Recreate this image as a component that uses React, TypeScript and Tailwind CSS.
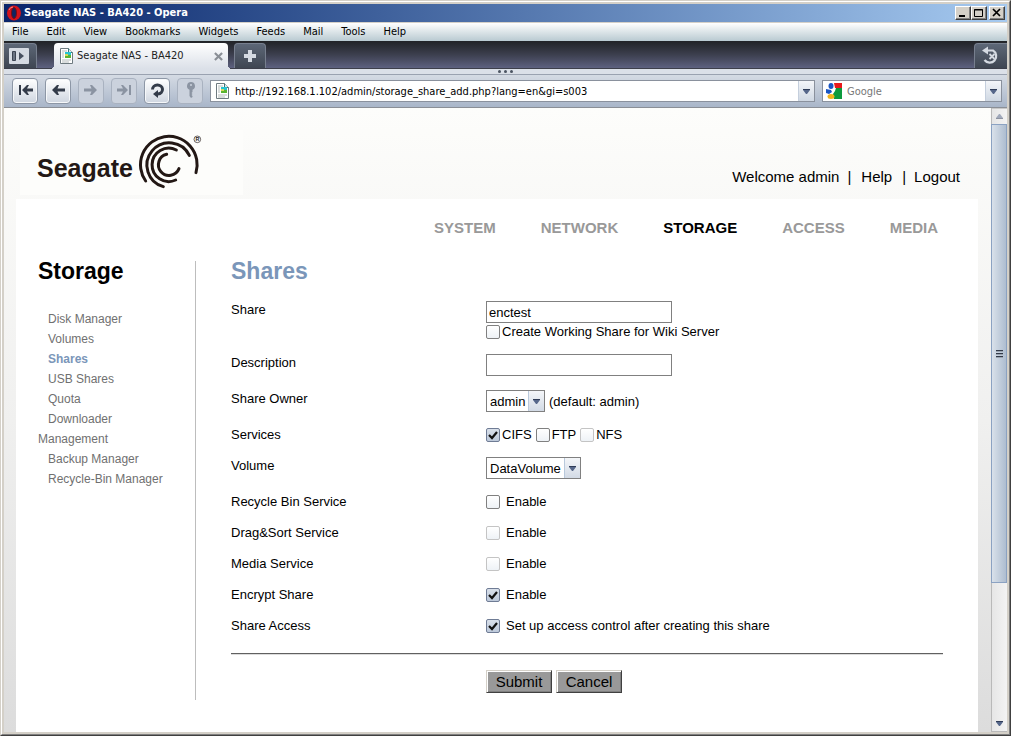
import React, { useState } from "react";
import clsx from "clsx";

const MENU = ["File", "Edit", "View", "Bookmarks", "Widgets", "Feeds", "Mail", "Tools", "Help"];
const NAV = ["SYSTEM", "NETWORK", "STORAGE", "ACCESS", "MEDIA"];
const SIDEBAR = [
  "Disk Manager",
  "Volumes",
  "Shares",
  "USB Shares",
  "Quota",
  "Downloader Management",
  "Backup Manager",
  "Recycle-Bin Manager",
];

const TOOLS = [
  { name: "Rewind", path: "M3 3h2v10H3zM6 8l5-5h2l-2 3.500h6v3h-6L13 13h-2z", enabled: true },
  { name: "Back", path: "M3 8l5-5h2L8.500 6.500H16v3H8.500L10 13H8z", enabled: true },
  { name: "Forward", path: "M15 8l-5-5H8l1.500 3.500H2v3h7.500L8 13h2z", enabled: false },
  { name: "Fast forward", path: "M14 3h2v10h-2zM13 8L8 3H6l2 3.500H2v3h6L6 13h2z", enabled: false },
  { name: "Reload", path: "", enabled: true },
  {
    name: "Wand",
    path: "M10 0a4 4 0 0 0-1.500 7.700V14l1.500 2 1.500-1V14l-1-1 1-1-1-1 1-1V7.700A4 4 0 0 0 10 0zm0 2a1 1 0 1 1 0 2 1 1 0 0 1 0-2z",
    enabled: false,
  },
];

const DownArrow = ({ className }: { className?: string }) => (
  <svg viewBox="0 0 7 5" className={clsx("h-[5px] w-[7px]", className)} aria-hidden="true">
    <path d="M0 0h7v1L4 5H3L0 1z" fill="#56678a" />
    <path d="M0 0h7v1H0z" fill="#2f3c58" />
  </svg>
);

const PageIcon = () => (
  <svg viewBox="0 0 13 16" className="h-4 w-[13px] shrink-0" aria-hidden="true">
    <path d="M.5.5h8l4 4v11H.5z" fill="#fff" stroke="#6e7a80" />
    <path d="M8.500.5v4h4" fill="#dfe8ea" stroke="#3f7478" />
    <path d="M2 3h5M2 12h9M2 14h7M2 5h2M2 7h2M2 9h2" stroke="#b4bbbb" />
    <path d="M5 4h6v3H5z" fill="#27c3d0" />
    <path d="M5 7h6v3H5z" fill="#5bb431" />
    <path d="M5 6h3v2H5z" fill="#d6d65a" />
  </svg>
);

const WindowButton = ({ label, children }: { label: string; children: React.ReactNode }) => (
  <button
    aria-label={label}
    className="flex h-[14px] w-4 items-center justify-center border border-t-white border-r-[#404040] border-b-[#404040] border-l-white bg-[#d4d0c8] shadow-[inset_-1px_-1px_0_#808080]"
  >
    <svg viewBox="0 0 12 10" className="h-[10px] w-3" fill="none" stroke="#000">
      {children}
    </svg>
  </button>
);

const TitleBar = () => (
  <div className="flex h-[18px] items-center bg-linear-to-r from-[#0a246a] to-[#a6caf0] px-[2px]">
    <svg viewBox="0 0 16 16" className="size-4" aria-hidden="true">
      <ellipse cx="8" cy="8" rx="7" ry="7.500" fill="#d3131b" />
      <ellipse cx="8" cy="8" rx="2.500" ry="5.500" fill="#0f2461" stroke="#7d0c12" />
      <path d="M3 5q1-3 4-3" stroke="#f58a86" fill="none" />
    </svg>
    <h1 className="ml-[2px] text-[11px] leading-4 font-bold text-white">Seagate NAS - BA420 - Opera</h1>
    <div className="ml-auto flex">
      <WindowButton label="Minimize">
        <path d="M2 8h6" strokeWidth="2" />
      </WindowButton>
      <WindowButton label="Maximize">
        <path d="M1.500 1.500h8v7h-8zM1 2h9" />
      </WindowButton>
      <div className="ml-[2px]">
        <WindowButton label="Close">
          <path d="M2 1l7 7M9 1L2 8" strokeWidth="1.700" />
        </WindowButton>
      </div>
    </div>
  </div>
);

const TabBar = () => (
  <div className="flex h-7 items-end border-b border-[#3d3f4b] bg-linear-to-b from-[#212327] via-[#3c3f4e] to-[#5d6180]">
    <button
      aria-label="Panels"
      className="flex h-[25px] w-[33px] items-center rounded-tr-[4px] border-t border-r border-[#777f8e] bg-linear-to-b from-[#5d6777] to-[#3f4652] pl-[5px]"
    >
      <svg viewBox="0 0 20 16" className="h-4 w-5">
        <rect width="20" height="16" rx="1" fill="#d5dae2" />
        <path d="M3.500 3.500h3v9h-3z" fill="#6a7382" stroke="#3c4452" />
        <path d="M10 4l5 4-5 4z" fill="#47505f" />
      </svg>
    </button>
    <div className="relative z-10 -mb-px ml-[17px] flex h-[26px] w-[174px] items-center rounded-t-[4px] bg-linear-to-b from-white to-[#dbe0e8] pr-[5px] pl-[6px] before:absolute before:bottom-0 before:-left-1 before:size-1 before:bg-[radial-gradient(circle_at_0_0,transparent_4px,#dbe0e8_4px)] after:absolute after:-right-1 after:bottom-0 after:size-1 after:bg-[radial-gradient(circle_at_100%_0,transparent_4px,#dbe0e8_4px)]">
      <PageIcon />
      <span className="ml-1 text-[11px] whitespace-nowrap text-[#222]">Seagate NAS - BA420</span>
      <button aria-label="Close tab" className="ml-auto">
        <svg viewBox="0 0 10 10" className="size-[9px]" stroke="#8a8f96" strokeWidth="2.400">
          <path d="M1 1l8 8M9 1L1 9" />
        </svg>
      </button>
    </div>
    <button
      aria-label="New tab"
      className="ml-[6px] flex h-[25px] w-8 items-center justify-center rounded-t-[4px] border border-b-0 border-[#777f8e] bg-linear-to-b from-[#5d6777] to-[#3f4652]"
    >
      <svg viewBox="0 0 12 12" className="size-3" fill="#d5dae2">
        <path d="M4 0h4v4h4v4H8v4H4V8H0V4h4z" />
      </svg>
    </button>
    <button
      aria-label="Closed tabs"
      className="ml-auto flex h-[25px] w-[33px] items-center justify-center rounded-tl-[4px] border-t border-l border-[#777f8e] bg-linear-to-b from-[#5d6777] to-[#3f4652]"
    >
      <svg viewBox="0 0 20 20" className="size-5" fill="none" stroke="#d5dae2">
        <path d="M6 4.500h6a6.500 6.500 0 1 1-8.500 9.500" strokeWidth="2.200" />
        <path d="M1 4.500l6-4v8z" fill="#d5dae2" stroke="none" />
        <path d="M8.500 8l5 5M13.500 8l-5 5" strokeWidth="1.800" />
      </svg>
    </button>
  </div>
);

const Toolbar = () => (
  <div className="flex h-8 items-center gap-[7px] bg-linear-to-b from-[#d5dbe4] to-[#a9b6c9] pr-[5px] pl-2">
    {TOOLS.map(({ name, path, enabled }) => (
      <button
        key={name}
        aria-label={name}
        disabled={!enabled}
        className={clsx(
          "flex size-[26px] shrink-0 items-center justify-center rounded-[4px] border",
          enabled
            ? "border-[#8d97a6] bg-linear-to-b from-white to-[#cfd6e0] text-[#333b49] shadow-[inset_0_0_0_1px_#f6f8fa]"
            : "border-[#a9b2c0] bg-[#cbd2dd] text-[#8b94a2]"
        )}
      >
        <svg viewBox="0 0 18 18" className="size-[18px]" fill="currentColor">
          {name === "Reload" ? (
            <>
              <path d="M4.500 7.500a5 4.500 0 1 1 5.500 4.500" fill="none" stroke="currentColor" strokeWidth="3" />
              <path d="M10 8v8l-5-4z" />
            </>
          ) : (
            <path d={path} fillRule="evenodd" />
          )}
        </svg>
      </button>
    ))}
    <div className="flex h-[22px] flex-1 items-center border border-[#8a919d] bg-white">
      <div className="pl-[5px]">
        <PageIcon />
      </div>
      <input
        aria-label="Address"
        className="h-full min-w-0 flex-1 px-[6px] text-[11px] text-black outline-none"
        defaultValue="http://192.168.1.102/admin/storage_share_add.php?lang=en&gi=s003"
      />
      <button
        aria-label="Address history"
        className="flex h-full w-4 items-center justify-center border-l border-[#c5cfdd] bg-linear-to-b from-[#f4f6f9] to-[#cfd8e3]"
      >
        <DownArrow />
      </button>
    </div>
    <div className="flex h-[22px] w-[180px] items-center border border-[#8a919d] bg-white">
      <svg viewBox="0 0 16 16" className="ml-[3px] size-4 shrink-0" aria-hidden="true">
        <path d="M8 0h8v5H9z" fill="#e8191c" />
        <path d="M10 5h6v11H8l-1-5 2-3z" fill="#0c9a3e" />
        <path d="M0 6l5 1 1 2-3 2-3-1z" fill="#1a56c4" />
        <ellipse cx="5" cy="3" rx="2.500" ry="3" fill="#1a56c4" />
        <ellipse cx="5" cy="13.500" rx="3.500" ry="2.500" fill="#f2b41b" />
      </svg>
      <input
        aria-label="Search"
        placeholder="Google"
        className="h-full min-w-0 flex-1 px-[5px] text-[11px] outline-none placeholder:text-[#777]"
      />
      <button
        aria-label="Search engines"
        className="flex h-full w-4 items-center justify-center border-l border-[#c5cfdd] bg-linear-to-b from-[#f4f6f9] to-[#cfd8e3]"
      >
        <DownArrow />
      </button>
    </div>
  </div>
);

const ScrollBar = () => (
  <div className="flex w-4 shrink-0 flex-col border-l border-[#b9b9b9] bg-linear-to-r from-[#e6e6e6] to-[#f3f3f3]">
    <button aria-label="Scroll up" className="flex h-4 items-center justify-center border-t border-[#c8c8c8]">
      <DownArrow className="rotate-180 opacity-50" />
    </button>
    <div className="-ml-px flex flex-[459] flex-col items-center justify-center gap-px border border-[#8ba2c2] bg-linear-to-r from-[#d9e1ea] to-[#aebdd0]">
      {[1, 2, 3].map((n) => (
        <span key={n} className="h-[2px] w-[7px] border-t border-[#333b49] bg-[#9aa4b1]" />
      ))}
    </div>
    <div className="flex-[133]" />
    <button aria-label="Scroll down" className="flex h-4 items-center justify-center border-b border-[#b9b9b9]">
      <DownArrow />
    </button>
  </div>
);

const SeagateLogo = () => (
  <div className="flex h-[65px] w-[223px] items-start bg-[#fdfdfb] pt-[4px] pl-[17px] text-[#231815]">
    <span className="mt-[18px] text-[25px] leading-8 font-bold">Seagate</span>
    <svg viewBox="414 72 192 165" className="ml-[5px] h-[55px] w-16" aria-hidden="true">
      <g fill="none" stroke="currentColor" strokeWidth="9" strokeLinecap="round">
        <path d="M437 213A85 85 0 1 1 588 188" />
        <path d="M490 230A67 67 0 1 1 568 136" />
        <path d="M527 210A50 50 0 1 1 529 120" />
        <path d="M537 176A32 32 0 1 1 500 133" />
      </g>
      <circle cx="592" cy="88" r="10" fill="none" stroke="currentColor" strokeWidth="2" />
      <text x="592" y="94" textAnchor="middle" fontSize="16" fontWeight="bold" fill="currentColor">
        R
      </text>
    </svg>
  </div>
);

interface CheckProps {
  id: string;
  label: string;
  checked?: boolean;
  disabled?: boolean;
  tight?: boolean;
}

const Check = ({ id, label, checked = false, disabled, tight }: CheckProps) => {
  const [on, setOn] = useState(checked);

  return (
    <div className="flex h-[17px] items-center">
      <span className="relative flex">
        <input
          id={id}
          type="checkbox"
          checked={on}
          disabled={disabled}
          onChange={(e) => setOn(e.target.checked)}
          className="size-[14px] appearance-none rounded-[2px] border border-[#808080] bg-linear-to-b from-white to-[#eef2f6] checked:border-[#6f7c95] checked:from-[#d9e0ea] checked:to-[#bdc9da] disabled:border-[#c4c4c4]"
        />
        {on && (
          <svg viewBox="0 0 14 14" className="pointer-events-none absolute inset-0 size-[14px]">
            <path d="M3 7l3 3 5-6" fill="none" stroke="#111" strokeWidth="2.200" />
          </svg>
        )}
      </span>
      <label htmlFor={id} className={tight ? "ml-[2px]" : "ml-[6px]"}>
        {label}
      </label>
    </div>
  );
};

const Select = ({ id, value, className }: { id: string; value: string; className: string }) => (
  <div className={clsx("relative h-[22px]", className)}>
    <select id={id} className="h-full w-full appearance-none border border-[#808080] bg-white pr-4 pl-[3px]">
      <option>{value}</option>
    </select>
    <span className="pointer-events-none absolute inset-y-px right-px flex w-4 items-center justify-center border-l border-[#b9c9dc] bg-linear-to-b from-[#f4f6f9] to-[#d2dae5]">
      <DownArrow />
    </span>
  </div>
);

interface RowProps {
  label: string;
  htmlFor?: string;
  children: React.ReactNode;
}

const Row = ({ label, htmlFor, children }: RowProps) => (
  <div className="flex items-start">
    {htmlFor ? (
      <label htmlFor={htmlFor} className="w-[255px] shrink-0">
        {label}
      </label>
    ) : (
      <span className="w-[255px] shrink-0">{label}</span>
    )}
    <div>{children}</div>
  </div>
);

const FormButton = ({ type, children }: { type: "submit" | "reset"; children: React.ReactNode }) => (
  <button
    type={type}
    className="h-[23px] w-[66px] border border-t-[#d4d0c8] border-r-[#404040] border-b-[#404040] border-l-[#d4d0c8] bg-[#999] text-[15px] leading-5 shadow-[inset_1px_1px_0_#fff,inset_-1px_-1px_0_#808080]"
  >
    {children}
  </button>
);

const SharesForm = () => (
  <form onSubmit={(e) => e.preventDefault()} className="text-[13px] leading-[17px] text-black">
    <div className="flex flex-col gap-[14px]">
      <Row label="Share" htmlFor="share">
        <input
          id="share"
          defaultValue="enctest"
          className="block h-[22px] w-[186px] border border-[#808080] px-[2px]"
        />
        <Check id="wiki" label="Create Working Share for Wiki Server" tight />
      </Row>
      <Row label="Description" htmlFor="description">
        <input id="description" className="block h-[22px] w-[186px] border border-[#808080] px-[2px]" />
      </Row>
      <Row label="Share Owner" htmlFor="owner">
        <div className="flex items-center gap-1">
          <Select id="owner" value="admin" className="w-[59px]" />
          <span>(default: admin)</span>
        </div>
      </Row>
      <Row label="Services">
        <div className="flex gap-1">
          <Check id="cifs" label="CIFS" checked tight />
          <Check id="ftp" label="FTP" tight />
          <Check id="nfs" label="NFS" disabled tight />
        </div>
      </Row>
      <Row label="Volume" htmlFor="volume">
        <Select id="volume" value="DataVolume" className="w-[95px]" />
      </Row>
      <Row label="Recycle Bin Service">
        <Check id="recycle" label="Enable" />
      </Row>
      <Row label="Drag&Sort Service">
        <Check id="dragsort" label="Enable" disabled />
      </Row>
      <Row label="Media Service">
        <Check id="media" label="Enable" disabled />
      </Row>
      <Row label="Encrypt Share">
        <Check id="encrypt" label="Enable" checked />
      </Row>
      <Row label="Share Access">
        <Check id="access" label="Set up access control after creating this share" checked />
      </Row>
    </div>
    <hr className="mt-[19px] mb-[15px] h-[2px] border-t border-b border-t-[#606060] border-b-[#dcdcdc]" />
    <div className="flex gap-1 pl-[255px]">
      <FormButton type="submit">Submit</FormButton>
      <FormButton type="reset">Cancel</FormButton>
    </div>
  </form>
);

const AdminPage = () => (
  <div className="flex min-w-0 flex-1 flex-col bg-linear-to-b from-[#fdfdfb] via-[#f0f0ef] to-[#dcdcdc] pr-[13px] pl-3 font-['Liberation_Sans',Arial,sans-serif]">
    <header className="flex h-[91px] items-start justify-between pt-[22px] pr-[18px] pl-1">
      <SeagateLogo />
      <div className="mt-[37px] flex text-[15px] leading-5 text-black">
        <span>Welcome admin</span>
        <span className="mx-2">|</span>
        <a href="#help" className="ml-[2px]">
          Help
        </a>
        <span className="mr-2 ml-[10px]">|</span>
        <a href="#logout">Logout</a>
      </div>
    </header>
    <div className="flex-1 bg-white">
      <nav className="flex justify-end gap-[45px] pt-[19px] pr-10 text-[15px] leading-5 font-bold text-[#999]">
        {NAV.map((item) => (
          <a key={item} href={`#${item.toLowerCase()}`} className={clsx(item === "STORAGE" && "text-black")}>
            {item}
          </a>
        ))}
      </nav>
      <div className="flex pt-[23px] pb-8 pl-[22px]">
        <aside className="min-h-[439px] w-[158px] shrink-0 border-r border-[#bdbdbd]">
          <h2 className="text-[23px] leading-5 font-bold text-black">Storage</h2>
          <ul className="mt-7 w-[140px] text-[12px] leading-5 text-[#707070]">
            {SIDEBAR.map((item) => (
              <li key={item} className="indent-[10px]">
                <a
                  href={`#${item.toLowerCase().replace(/ /g, "-")}`}
                  className={clsx(item === "Shares" && "font-bold text-[#7a96b9]")}
                >
                  {item}
                </a>
              </li>
            ))}
          </ul>
        </aside>
        <main className="flex-1 px-[35px]">
          <h2 className="mb-[19px] text-[23px] leading-[21px] font-bold text-[#7a96b9]">Shares</h2>
          <SharesForm />
        </main>
      </div>
    </div>
  </div>
);

const App = () => (
  <div className="flex min-h-screen border border-t-[#d4d0c8] border-r-[#404040] border-b-[#404040] border-l-[#d4d0c8] bg-[#d4d0c8] font-['DejaVu_Sans_Condensed','DejaVu_Sans',sans-serif]">
    <div className="flex min-w-0 flex-1 flex-col border border-t-white border-r-[#808080] border-b-[#808080] border-l-white p-[2px]">
      <TitleBar />
      <nav className="mt-px flex h-[18px] items-center gap-[18px] bg-linear-to-b from-white to-[#b9cad1] px-2 text-[11px] leading-4 text-black">
        {MENU.map((item) => (
          <button key={item}>{item}</button>
        ))}
      </nav>
      <TabBar />
      <div className="flex h-[6px] items-center justify-center gap-[3px] border-b border-[#9aa2b0] bg-[#dbe0e8]">
        {[1, 2, 3].map((n) => (
          <span key={n} className="size-[3px] rounded-full bg-[#4c5462]" />
        ))}
      </div>
      <Toolbar />
      <div className="flex flex-1 border-t border-[#8b8f96]">
        <AdminPage />
        <ScrollBar />
      </div>
    </div>
  </div>
);

export default App;
